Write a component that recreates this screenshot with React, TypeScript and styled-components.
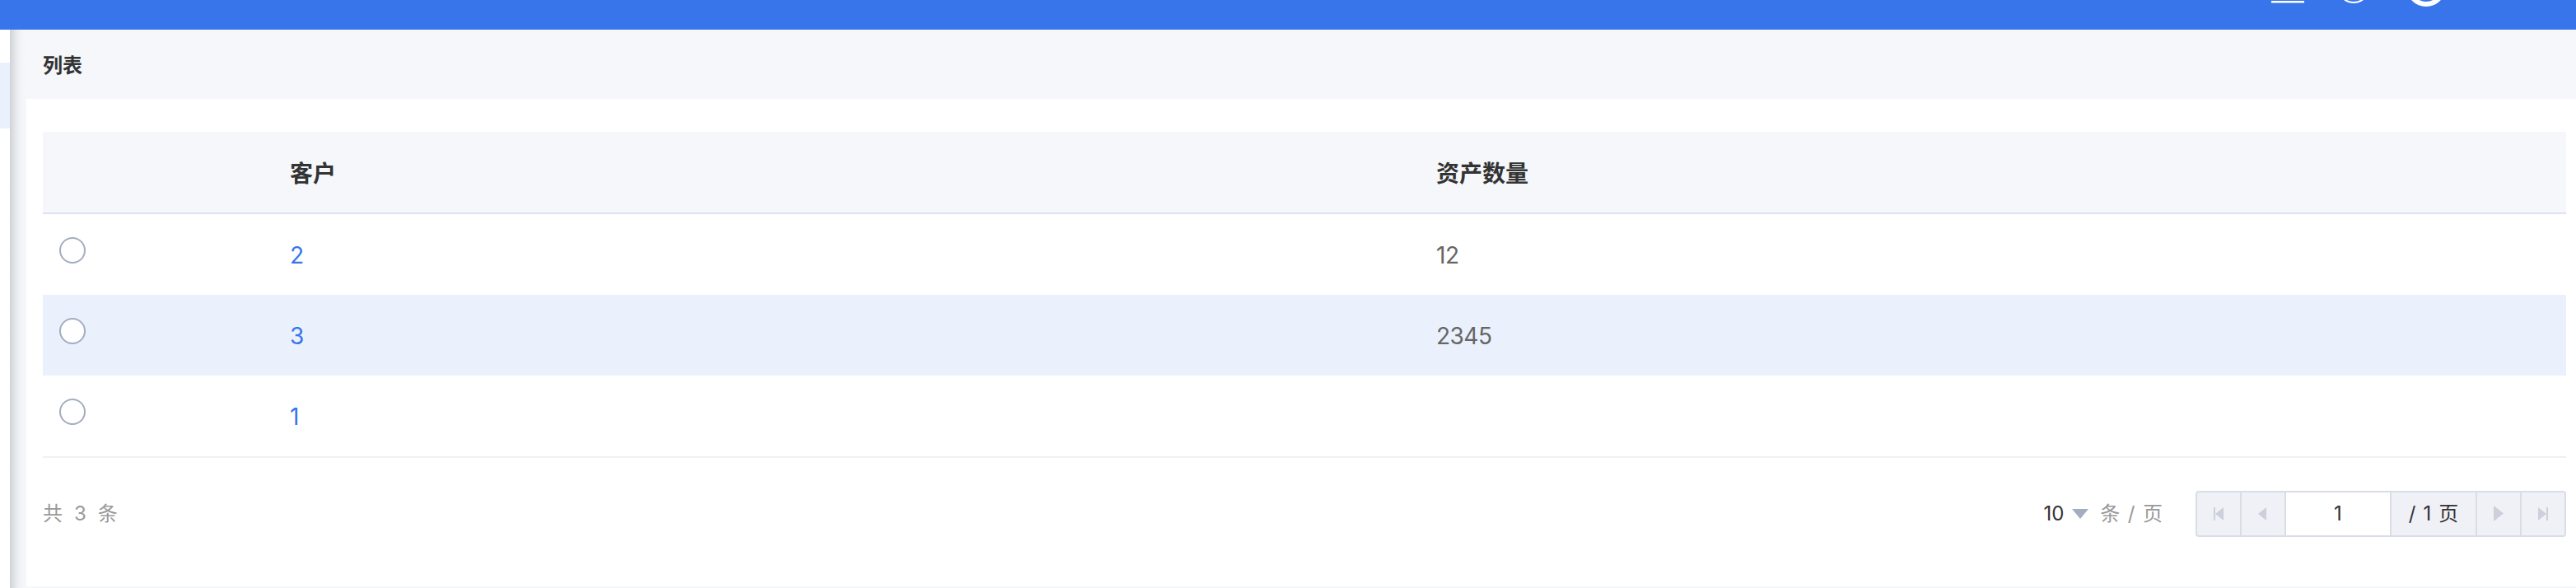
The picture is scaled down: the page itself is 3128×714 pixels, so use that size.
import { useState } from "react";
import styled, { createGlobalStyle } from "styled-components";

const GlobalStyle = createGlobalStyle`
  * {
    box-sizing: border-box;
  }
  body {
    margin: 0;
    background-color: #ffffff;
    font-family: Inter, "Noto Sans CJK SC", sans-serif;
    color: #333333;
  }
`;

const Page = styled.div`
  display: flex;
  flex-direction: column;
  height: 714px;
  overflow: hidden;
`;

const TopBar = styled.header`
  display: flex;
  justify-content: flex-end;
  flex: none;
  height: 36px;
  padding-right: 158px;
  background-color: #3875eb;
`;

const Body = styled.div`
  display: flex;
  flex: 1;
  min-height: 0;
`;

const Sidebar = styled.aside`
  flex: none;
  width: 12px;
  padding-top: 40px;
  background-color: #ffffff;
`;

const SidebarItem = styled.div`
  height: 80px;
  background-color: #eaf1fd;
`;

const Content = styled.main`
  flex: 1;
  min-width: 0;
  padding-left: 20px;
  background: linear-gradient(
      to right,
      rgba(0, 0, 0, 0.15) 0,
      rgba(0, 0, 0, 0.085) 5px,
      rgba(0, 0, 0, 0.03) 10px,
      rgba(0, 0, 0, 0.008) 15px,
      rgba(0, 0, 0, 0) 20px
    )
    #f5f7fb;
`;

const Title = styled.h1`
  height: 84px;
  margin: 0;
  padding-left: 20px;
  font-size: 24px;
  font-weight: 600;
  line-height: 88px;
`;

const Card = styled.section`
  height: 592px;
  padding: 40px 12px 0 20px;
  background-color: #ffffff;
`;

const Row = styled.div<{ $active?: boolean }>`
  display: grid;
  grid-template-columns: 300px 1392px 1fr;
  height: 98px;
  font-size: 28px;
  line-height: 100px;
  background-color: ${({ $active }) => ($active ? "#eaf1fd" : "#ffffff")};
`;

const HeadRow = styled(Row)`
  height: 100px;
  font-weight: 600;
  line-height: 102px;
  background-color: #f5f7fb;
  border-bottom: 2px solid #dbe2f9;
`;

const Rows = styled.div`
  border-bottom: 2px solid #f0f0f0;
`;

const Radio = styled.button`
  display: block;
  width: 32px;
  height: 32px;
  margin: 28px 0 0 20px;
  padding: 0;
  border: 2px solid #a3adbf;
  border-radius: 50%;
  background-color: #ffffff;
`;

const Customer = styled.a`
  color: #3875eb;
`;

const Count = styled.span`
  color: #666666;
  letter-spacing: -0.5px;
`;

const Footer = styled.div`
  display: flex;
  align-items: center;
  height: 56px;
  margin-top: 40px;
  font-size: 24px;
  line-height: 56px;
`;

const Total = styled.div`
  display: flex;
  gap: 14px;
  margin-right: auto;
  color: #999999;
`;

const PageSize = styled.div`
  display: flex;
  align-items: center;
  gap: 10px;
  margin-right: 40px;
`;

const Unit = styled.span`
  display: flex;
  gap: 9.5px;
  margin-left: 4px;
  color: #999999;
`;

const Pager = styled.div`
  display: flex;
  height: 56px;
  border: 2px solid #d9dde6;
  border-radius: 4px;
  background-color: #eff1f6;
  overflow: hidden;
`;

const PagerCell = styled.div<{ $width?: number; $white?: boolean }>`
  display: flex;
  align-items: center;
  justify-content: center;
  gap: 9px;
  width: ${({ $width }) => $width || 54}px;
  background-color: ${({ $white }) => ($white ? "#ffffff" : "transparent")};
  border-right: 2px solid #d9dde6;

  &:last-child {
    width: 52px;
    border-right: none;
  }
`;

const rows = [
  { customer: "2", count: "12" },
  { customer: "3", count: "2345" },
  { customer: "1", count: "" },
];

const arrows = {
  first: "M20 18h2v16h-2zM32 18v16L22 26z",
  prev: "M30 18v16L20 26z",
  next: "M20 16v19l12-9.5z",
  last: "M20 18v16l10-8zM30 18h2v16h-2z",
};

const Arrow = ({ name }: { name: keyof typeof arrows }) => (
  <svg width="52" height="52" viewBox="0 0 52 52" fill="#cbd0da">
    <path d={arrows[name]} />
  </svg>
);

const App = () => {
  const [hovered, setHovered] = useState("3");

  return (
    <Page>
      <GlobalStyle />
      <TopBar>
        <svg width="212" height="36" viewBox="0 0 212 36" fill="none">
          <path d="M0 2.3h40" stroke="#ffffff" strokeWidth="2.4" />
          <circle cx="100" cy="-16" r="19" stroke="#ffffff" strokeWidth="2" />
          <circle cx="188" cy="-16" r="21" stroke="#ffffff" strokeWidth="6" />
        </svg>
      </TopBar>
      <Body>
        <Sidebar>
          <SidebarItem />
        </Sidebar>
        <Content>
          <Title>列表</Title>
          <Card>
            <HeadRow>
              <span />
              <span>客户</span>
              <span>资产数量</span>
            </HeadRow>
            <Rows>
              {rows.map(({ customer, count }) => (
                <Row
                  key={customer}
                  $active={hovered === customer}
                  onMouseEnter={() => setHovered(customer)}
                >
                  <Radio />
                  <Customer>{customer}</Customer>
                  <Count>{count}</Count>
                </Row>
              ))}
            </Rows>
            <Footer>
              <Total>
                <span>共</span>
                <span>3</span>
                <span>条</span>
              </Total>
              <PageSize>
                <span>10</span>
                <svg width="20" height="12" viewBox="0 0 20 12" fill="#a3adbf">
                  <path d="M0 0h20L10 12z" />
                </svg>
                <Unit>
                  <span>条</span>
                  <span>/</span>
                  <span>页</span>
                </Unit>
              </PageSize>
              <Pager>
                <PagerCell>
                  <Arrow name="first" />
                </PagerCell>
                <PagerCell>
                  <Arrow name="prev" />
                </PagerCell>
                <PagerCell $width={128} $white>
                  1
                </PagerCell>
                <PagerCell $width={104}>
                  <span>/</span>
                  <span>1</span>
                  <span>页</span>
                </PagerCell>
                <PagerCell>
                  <Arrow name="next" />
                </PagerCell>
                <PagerCell>
                  <Arrow name="last" />
                </PagerCell>
              </Pager>
            </Footer>
          </Card>
        </Content>
      </Body>
    </Page>
  );
};

export default App;
